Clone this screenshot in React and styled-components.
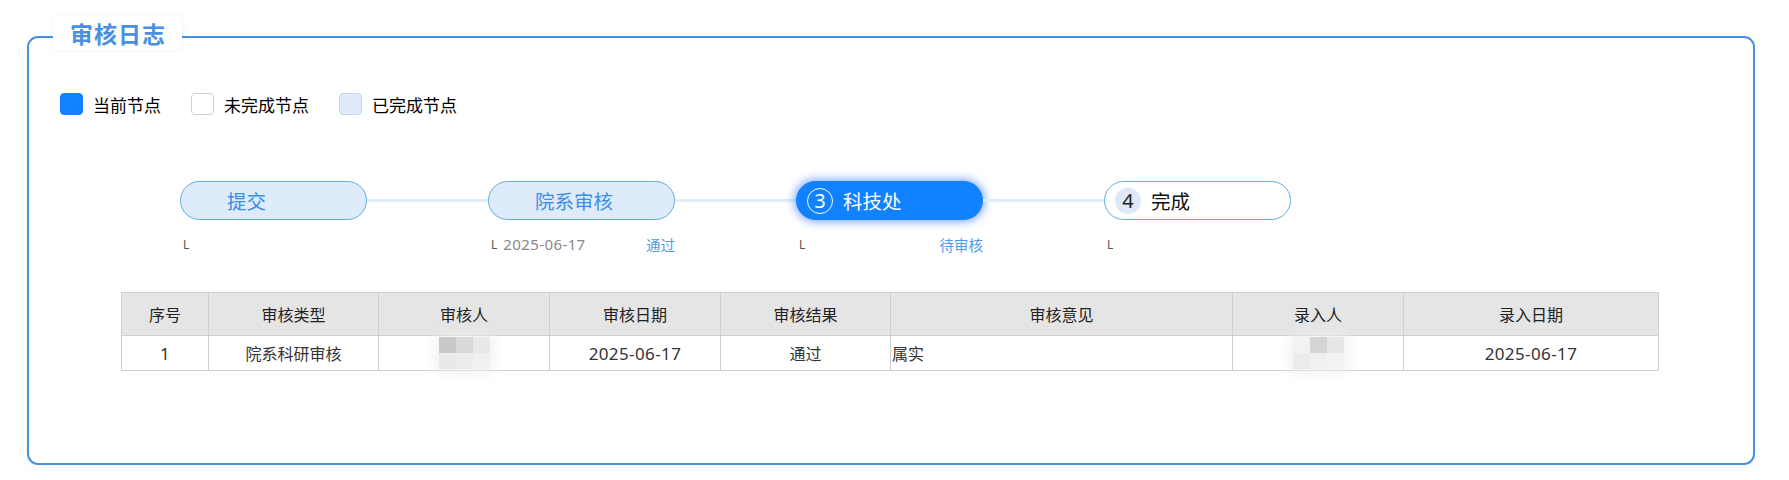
import React from "react";
import styled, { createGlobalStyle, css } from "styled-components";

const Global = createGlobalStyle`
  html, body { margin: 0; padding: 0; background: #ffffff; }
  body { font-family: "Noto Sans CJK SC", "Noto Sans", sans-serif; color: #333; }
  * { box-sizing: border-box; }
`;

const Page = styled.div`
  width: 1789px;
  height: 480px;
  padding: 36px 0 0 27px;
`;

const Panel = styled.section`
  position: relative;
  width: 1728px;
  height: 429px;
  border: 2px solid #4a90e2;
  border-radius: 11px;
  box-shadow: 0 3px 10px rgba(40, 100, 200, 0.06);
  padding: 55px 0 0 31px;
`;

const Title = styled.h2`
  position: absolute;
  left: 24px;
  top: -22px;
  margin: 0;
  height: 34px;
  padding: 0 16px 0 17px;
  background: #fff;
  border-radius: 8px;
  box-shadow: 0 0 6px rgba(74, 144, 226, 0.12);
  font-size: 23px;
  line-height: 34px;
  font-weight: 700;
  letter-spacing: 1px;
  color: #4a8fe0;
`;

const Legend = styled.div`
  display: flex;
  align-items: center;
  gap: 30px;
  height: 22px;
`;

const LegendItem = styled.div`
  display: flex;
  align-items: center;
  gap: 10px;
  font-size: 17px;
  color: #000;
`;

const swatch = {
  current: css`background: #1081ff; border-color: #1081ff;`,
  todo: css`background: #fff; border-color: #cfcfcf;`,
  done: css`background: #dee9f9; border-color: #c9d6e6;`,
};

const Swatch = styled.span`
  width: 23px;
  height: 22px;
  border-radius: 4px;
  border: 1px solid;
  ${(p) => swatch[p.$kind]}
`;

const Steps = styled.div`
  display: flex;
  align-items: flex-start;
  margin: 66px 0 0 120px;
`;

const Step = styled.div`
  display: flex;
  flex-direction: column;
  width: 187px;
`;

const pillKinds = {
  done: css`background: #deebfb; border-color: #62aedd; color: #3a8ee6;`,
  current: css`background: #1081ff; border-color: #1081ff; color: #fff;
    box-shadow: 0 0 9px 2px rgba(30, 100, 255, 0.55);`,
  todo: css`background: #fff; border-color: #62aedd; color: #111;`,
};

const Pill = styled.div`
  height: 39px;
  border: 1px solid;
  border-radius: 20px;
  display: flex;
  align-items: center;
  gap: 10px;
  padding-left: 10px;
  font-size: 19.5px;
  ${(p) => pillKinds[p.$kind]}
`;

const Num = styled.span`
  width: 26px;
  height: 26px;
  border-radius: 50%;
  display: flex;
  align-items: center;
  justify-content: center;
  font-size: 20px;
  line-height: 1;
  font-family: "Noto Sans", sans-serif;
  ${(p) =>
    p.$kind === "current"
      ? css`border: 1.5px solid #fff; color: #fff;`
      : p.$kind === "todo"
      ? css`background: #dde9f8; color: #222;`
      : css`visibility: hidden;`}
`;

const Connector = styled.div`
  flex: 0 0 121px;
  height: 3px;
  margin-top: 18px;
  background: #e0ecfa;
`;

const SubRow = styled.div`
  display: flex;
  justify-content: space-between;
  align-items: center;
  height: 20px;
  margin-top: 14px;
  padding-left: 3px;
`;

const SubLeft = styled.span`
  display: flex;
  align-items: center;
  gap: 6px;
`;

const Mark = styled.span`
  font-family: "Noto Sans", sans-serif;
  font-size: 12px;
  color: #555;
`;

const StepDate = styled.span`
  font-family: "Noto Sans", sans-serif;
  font-size: 15px;
  letter-spacing: 0.4px;
  color: #888;
`;

const Status = styled.span`
  font-size: 14.5px;
  color: #4a9cf0;
`;

const Table = styled.table`
  margin: 38px 0 0 61px;
  width: 1537px;
  table-layout: fixed;
  border-collapse: collapse;
  font-size: 16px;
`;

const Th = styled.th`
  height: 43px;
  background: #e5e5e5;
  border: 1px solid #cfcfcf;
  font-weight: 400;
  color: #222;
  padding: 0;
`;

const Td = styled.td`
  height: 35px;
  border: 1px solid #cfcfcf;
  text-align: ${(p) => p.$align || "center"};
  padding: 0 ${(p) => (p.$align === "left" ? "1px" : "0")};
  color: #333;
  font-family: "Noto Sans", "Noto Sans CJK SC", sans-serif;
  ${(p) => p.$num && css`font-size: 17px; letter-spacing: 0.4px;`}
`;

const Mosaic = styled.div`
  display: inline-grid;
  grid-template-columns: repeat(3, 17px);
  grid-template-rows: repeat(2, 16px);
  vertical-align: middle;
  filter: blur(0.6px);
  box-shadow: 0 0 10px 6px rgba(238, 238, 238, 0.6);
  border-radius: 6px;
`;

const Block = styled.span`
  background: ${(p) => p.$c};
`;

const STEPS = [
  { kind: "done", n: "", label: "提交" },
  { kind: "done", n: "", label: "院系审核", date: "2025-06-17", status: "通过" },
  { kind: "current", n: "3", label: "科技处", status: "待审核" },
  { kind: "todo", n: "4", label: "完成" },
];

const COLS = [
  ["序号", 87],
  ["审核类型", 170],
  ["审核人", 171],
  ["审核日期", 171],
  ["审核结果", 170],
  ["审核意见", 342],
  ["录入人", 171],
  ["录入日期", 255],
];

const Blur = ({ shades }) => (
  <Mosaic>
    {shades.map((c, i) => (
      <Block key={i} $c={c} />
    ))}
  </Mosaic>
);

export default function App() {
  return (
    <Page>
      <Global />
      <Panel>
        <Title>审核日志</Title>
        <Legend>
          <LegendItem><Swatch $kind="current" />当前节点</LegendItem>
          <LegendItem><Swatch $kind="todo" />未完成节点</LegendItem>
          <LegendItem><Swatch $kind="done" />已完成节点</LegendItem>
        </Legend>

        <Steps>
          {STEPS.map((s, i) => (
            <React.Fragment key={s.label}>
              {i > 0 && <Connector />}
              <Step>
                <Pill $kind={s.kind}>
                  <Num $kind={s.kind}>{s.n}</Num>
                  {s.label}
                </Pill>
                <SubRow>
                  <SubLeft>
                    <Mark>L</Mark>
                    {s.date && <StepDate>{s.date}</StepDate>}
                  </SubLeft>
                  {s.status && <Status>{s.status}</Status>}
                </SubRow>
              </Step>
            </React.Fragment>
          ))}
        </Steps>

        <Table>
          <colgroup>
            {COLS.map(([h, w]) => (
              <col key={h} style={{ width: w }} />
            ))}
          </colgroup>
          <thead>
            <tr>
              {COLS.map(([h]) => (
                <Th key={h}>{h}</Th>
              ))}
            </tr>
          </thead>
          <tbody>
            <tr>
              <Td $num>1</Td>
              <Td>院系科研审核</Td>
              <Td>
                <Blur shades={["#c9c9c9", "#d9d9d9", "#e9e9e9", "#e9e9e9", "#ededed", "#eef0f2"]} />
              </Td>
              <Td $num>2025-06-17</Td>
              <Td>通过</Td>
              <Td $align="left">属实</Td>
              <Td>
                <Blur shades={["#f2f2f2", "#d4d4d4", "#e6e6e6", "#ececec", "#f0f0f0", "#f3f3f3"]} />
              </Td>
              <Td $num>2025-06-17</Td>
            </tr>
          </tbody>
        </Table>
      </Panel>
    </Page>
  );
}
